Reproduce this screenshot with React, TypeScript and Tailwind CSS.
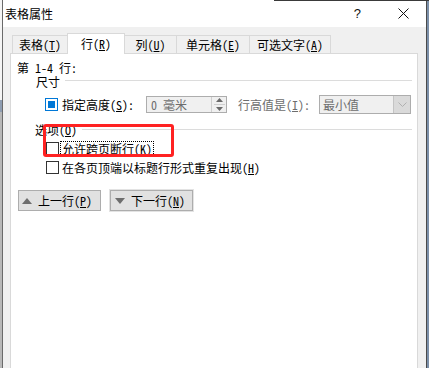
import React from "react";

function Box({ checked }: { checked?: boolean }) {
  return checked ? (
    <div className="w-[13px] h-[13px] border border-[#0078d7] bg-white p-[2px] shrink-0">
      <div className="w-full h-full bg-[#0078d7]" />
    </div>
  ) : (
    <div className="w-[13px] h-[13px] border border-[#333333] bg-white shrink-0" />
  );
}

function Tab({ w, label, k, selected, first }: { w: string; label: string; k: string; selected?: boolean; first?: boolean }) {
  if (selected) {
    return (
      <div className={`${w} h-[21px] -ml-px -mb-px relative z-10 bg-white border-t border-l border-r border-[#d9d9d9] flex items-start justify-center pt-[3px] leading-[14px]`}>
        <span>
          {label}(<span className="underline">{k}</span>)
        </span>
      </div>
    );
  }
  return (
    <div className={`${w} h-[18px] ${first ? "" : "-ml-px"} bg-[#f0f0f0] border-t border-l border-r border-[#d9d9d9] flex items-center justify-center leading-[14px]`}>
      <span>
        {label}(<span className="underline">{k}</span>)
      </span>
    </div>
  );
}

export default function App() {
  return (
    <div className="w-[429px] h-[368px] relative overflow-hidden bg-[#f0f0f0] text-[12px] text-black font-['Noto_Sans_Mono_CJK_SC','Noto_Sans_CJK_SC','Noto_Sans',sans-serif] flex">
      {/* left edge of window behind */}
      <div className="w-[3px] h-full flex flex-col border-r border-[#6a6a6a] shrink-0">
        <div className="h-[100px] bg-[#f4f4f4]" />
        <div className="h-[12px] bg-[#8e9db2]" />
        <div className="flex-1 bg-[#b8b8b8]" />
      </div>

      {/* dialog */}
      <div className="w-[423px] h-full flex flex-col shrink-0">
        {/* title bar */}
        <div className="h-[27px] bg-white flex items-center pl-[2px] shrink-0">
          <span className="leading-[16px] text-[12px] font-['Noto_Sans_CJK_SC',sans-serif]">表格属性</span>
          <span className="ml-auto leading-[14px] text-[13px] font-['Liberation_Sans',sans-serif] text-[#111]">?</span>
          <svg className="ml-[37px] mr-[17px]" width="11" height="11" viewBox="0 0 11 11">
            <path d="M0.5 0.5 L10.5 10.5 M10.5 0.5 L0.5 10.5" stroke="#111" strokeWidth="1" fill="none" />
          </svg>
        </div>

        {/* body */}
        <div className="flex-1 flex flex-col">
          {/* tabs */}
          <div className="flex items-end ml-[9px] mt-[6px] h-[20px]">
            <Tab w="w-[56px]" label="表格" k="T" first />
            <Tab w="w-[58px]" label="行" k="R" selected />
            <Tab w="w-[53px]" label="列" k="U" />
            <Tab w="w-[74px]" label="单元格" k="E" />
            <Tab w="w-[82px]" label="可选文字" k="A" />
          </div>

          {/* panel */}
          <div className="ml-[7px] w-[408px] flex-1 bg-white border border-[#d9d9d9] border-b-0 flex flex-col">
            <div className="ml-[6px] mt-[7px] h-[14px] leading-[14px]">第 1-4 行:</div>

            <div className="ml-[25px] h-[14px] flex items-start">
              <span className="leading-[14px]">尺寸</span>
              <div className="flex-1 ml-[5px] mr-[5px] mt-[5px] h-px bg-[#dcdcdc]" />
            </div>

            <div className="ml-[34px] mt-[6px] h-[19px] flex items-center">
              <Box checked />
              <div className="ml-[4px] w-[84px] leading-[14px]">
                指定高度(<span className="underline">S</span>):
              </div>
              <div className="w-[81px] h-[17px] border border-[#adadad] bg-[#f0f0f0] flex">
                <div className="flex-1 pl-[4px] text-[#6d6d6d] leading-[15px]">0 毫米</div>
                <div className="w-[15px] border-l border-[#cfcfcf] flex flex-col items-center justify-center">
                  <svg width="7" height="4" viewBox="0 0 7 4">
                    <path d="M0 4 L3.5 0 L7 4 Z" fill="#6a6a6a" />
                  </svg>
                  <div className="w-[11px] h-px bg-[#cfcfcf] my-[2px]" />
                  <svg width="7" height="4" viewBox="0 0 7 4">
                    <path d="M0 0 L3.5 4 L7 0 Z" fill="#6a6a6a" />
                  </svg>
                </div>
              </div>
              <div className="ml-[11px] w-[81px] leading-[14px] text-[#6d6d6d]">
                行高值是(<span className="underline">I</span>):
              </div>
              <div className="w-[92px] h-[19px] border border-[#adadad] bg-[#f0f0f0] flex">
                <div className="flex-1 pl-[3px] text-[#6d6d6d] leading-[17px]">最小值</div>
                <div className="w-[17px] border-l border-[#c4c4c4] bg-[#dadada] flex items-center justify-center">
                  <svg width="9" height="5" viewBox="0 0 9 5">
                    <path d="M0.5 0.5 L4.5 4.5 L8.5 0.5" stroke="#b0b0b0" strokeWidth="1" fill="none" />
                  </svg>
                </div>
              </div>
            </div>

            <div className="ml-[24px] mt-[9px] h-[14px] flex items-start">
              <span className="leading-[14px]">
                选项(<span className="underline">O</span>)
              </span>
              <div className="flex-1 ml-[5px] mr-[5px] mt-[6px] h-px bg-[#dcdcdc]" />
            </div>

            <div className="ml-[35px] mt-[4px] h-[15px] flex items-center">
              <Box />
              <div className="ml-px h-[15px] px-px border border-dotted border-black flex items-center leading-[13px]">
                允许跨页断行(<span className="underline">K</span>)
              </div>
            </div>

            <div className="ml-[35px] mt-[4px] h-[15px] flex items-center">
              <Box />
              <div className="ml-[3px] leading-[14px]">
                在各页顶端以标题行形式重复出现(<span className="underline">H</span>)
              </div>
            </div>

            <div className="ml-[7px] mt-[15px] flex">
              <div className="w-[83px] h-[21px] border border-[#adadad] bg-[#e1e1e1] flex items-center pl-[3px]">
                <svg width="10" height="6" viewBox="0 0 10 6">
                  <path d="M0 6 L5 0 L10 6 Z" fill="#6d6d6d" />
                </svg>
                <span className="ml-[6px] leading-[14px]">
                  上一行(<span className="underline">P</span>)
                </span>
              </div>
              <div className="ml-[9px] w-[83px] h-[21px] border border-[#adadad] bg-[#e1e1e1] shadow-[0_0_0_1px_#e3e3e3] flex items-center pl-[4px]">
                <svg width="10" height="6" viewBox="0 0 10 6">
                  <path d="M0 0 L5 6 L10 0 Z" fill="#6d6d6d" />
                </svg>
                <span className="ml-[6px] leading-[14px]">
                  下一行(<span className="underline">N</span>)
                </span>
              </div>
            </div>
          </div>
        </div>
      </div>

      {/* right edge */}
      <div className="w-[3px] h-full flex shrink-0">
        <div className="w-px h-full bg-[#4a4a4a]" />
        <div className="w-[2px] h-full bg-[#7b8fa8]" />
      </div>

      {/* top edge line of window behind */}
      <div className="absolute top-0 left-[274px] right-0 h-px bg-[#3a3a3a]" />

      {/* red annotation rectangle */}
      <div className="absolute left-[43px] top-[124px] w-[131px] h-[33px] border-[3px] border-[#ff2222] rounded-[3px]" />
    </div>
  );
}
